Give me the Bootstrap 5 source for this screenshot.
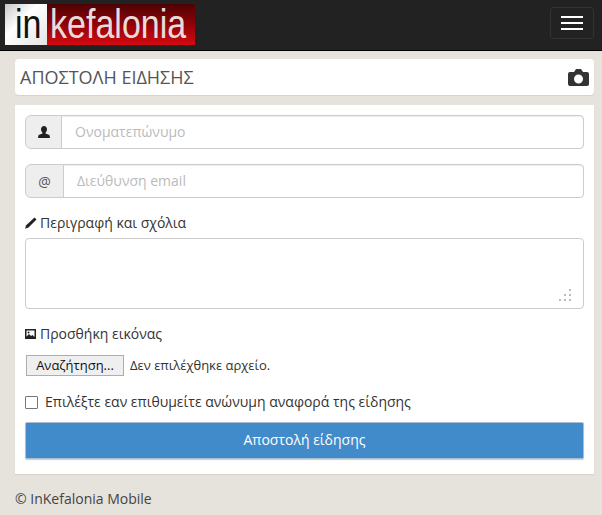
<!DOCTYPE html>
<html lang="el">
<head>
    <meta charset="UTF-8">
    <meta name="viewport" content="width=device-width, initial-scale=1.0">
    <title>InKefalonia Mobile</title>
    <link rel="stylesheet" href="https://cdn.jsdelivr.net/npm/bootstrap@5.3.0/dist/css/bootstrap.min.css">
    <style>
        body { background: #e6e2dc; color: #333; font-family: "Open Sans", "Noto Sans", sans-serif; font-size: 14px; line-height: 20px; }
        .top-bar { height: 51px; background: #222; border-bottom: 1px solid #000; padding: 4px 8px 0 5px; }
        .logo { display: flex; width: 190px; height: 41px; font-family: "Liberation Sans", sans-serif; font-size: 41px; line-height: 40px; }
        .logo span { display: block; transform: scaleX(.83); transform-origin: left; }
        .logo-in { flex: 0 0 39px; padding-left: 10px; color: #111; background: linear-gradient(135deg, #c8c8c8, #fff 40%, #e4e4e4); }
        .logo-name { flex: 1; min-width: 0; padding-left: 3px; color: #e6dcdc; background: linear-gradient(#4e0205, #8a0206 45%, #d40a10); }
        .menu-btn { width: 44px; height: 32px; margin-top: 3px; padding: 0; background: none; border: 1px solid #333; border-radius: 4px; }
        .menu-btn span { display: block; width: 22px; height: 2px; margin: 4px auto; background: #fff; }
        .page-wrap { padding: 8px 8px 0 15px; }
        .title-box { height: 36px; margin-bottom: 10px; padding: 0 5px; background: #fff; border-radius: 4px; box-shadow: 0 1px 1px #d6d2cc; }
        .title-box h1 { margin: 0; font-size: 18px; line-height: 38px; font-weight: 400; color: #555; }
        .form-box { height: 369px; padding: 10px 10px 0; background: #fff; box-shadow: 0 1px 1px #d6d2cc; }
        .field-group { height: 34px; margin-bottom: 15px; }
        .field-group .input-group-text { justify-content: center; padding: 0; font-size: 14px; color: #555; background: #eee; border-color: #ccc; }
        .addon-user { width: 37px; }
        .addon-at { width: 39px; }
        .field-group .form-control, .note-area { font-size: 14px; color: #555; border-color: #ccc; border-radius: 4px; }
        .field-group .form-control { height: 34px; min-height: 34px; padding: 5px 12px 7px 13px; line-height: 20px; box-shadow: inset 0 1px 1px rgba(0,0,0,.075); }
        .form-control::placeholder { color: #bbb; }
        .field-label { margin-bottom: 5px; color: #333; gap: 3px; }
        .note-wrap { height: 71px; margin-bottom: 15px; }
        .note-area { height: 71px; resize: none; }
        .grip { position: absolute; right: 13px; bottom: 8px; }
        .image-label { margin-bottom: 11px; gap: 4px; }
        .file-row { margin-bottom: 16px; margin-left: 1px; height: 21px; font-size: 13px; line-height: 18px; }
        .file-row span { margin-left: 6px; padding-bottom: 2px; }
        .file-btn { width: 98px; height: 21px; padding: 0 0 1px; font-size: 13px; line-height: 18px; color: #111; background: #efefef; border: 1px solid #adadad; }
        .check-row { height: 20px; margin-bottom: 10px; gap: 7px; }
        .check-row .form-check-input { width: 13px; height: 13px; margin: 0; border: 1px solid #767676; border-radius: 1px; }
        .send-btn { height: 37px; padding: 0 0 2px; font-size: 14px; color: #fff; background: #428bca; border: 1px solid #a9bfd0; border-radius: 2px; box-shadow: 0 1px 1px rgba(0,0,0,.2); }
        .foot-text { padding-top: 15px; color: #444; }
    </style>
</head>
<body>
    <div class="top-bar d-flex justify-content-between">
        <div class="logo">
            <div class="logo-in"><span>in</span></div>
            <div class="logo-name"><span>kefalonia</span></div>
        </div>
        <button class="menu-btn" type="button" aria-label="Menu"><span></span><span></span><span></span></button>
    </div>

    <div class="page-wrap">
        <div class="title-box d-flex justify-content-between align-items-center">
            <h1>ΑΠΟΣΤΟΛΗ ΕΙΔΗΣΗΣ</h1>
            <svg width="21" height="17" viewBox="0 0 21 17"><path fill="#333" fill-rule="evenodd" d="M2 3h4l2-3h5l2 3h4a2 2 0 0 1 2 2v10a2 2 0 0 1-2 2H2a2 2 0 0 1-2-2V5a2 2 0 0 1 2-2zM10.500 5.500a4.500 4.500 0 1 0 0 9 4.500 4.500 0 0 0 0-9z"/></svg>
        </div>

        <form class="form-box">
            <div class="input-group field-group">
                <span class="input-group-text addon-user">
                    <svg width="12" height="12" viewBox="0 0 12 12"><path fill="#222" d="M6 0c1.800 0 3 1.300 3 3.300 0 1.500-.7 2.800-1.500 3.400v.8c1.800.5 4 1.300 4.200 2.300l.3 2.200H0l.3-2.200c.2-1 2.400-1.800 4.200-2.300v-.8C3.700 6.100 3 4.800 3 3.300 3 1.300 4.200 0 6 0z"/></svg>
                </span>
                <input type="text" class="form-control" placeholder="Ονοματεπώνυμο">
            </div>
            <div class="input-group field-group">
                <span class="input-group-text addon-at">@</span>
                <input type="text" class="form-control" placeholder="Διεύθυνση email">
            </div>

            <div class="field-label d-flex align-items-center">
                <svg width="12" height="12" viewBox="0 0 12 12"><path fill="#222" d="M9.500 0.500l2 2-8 8-3.500 1.200 1.200-3.500z"/></svg>
                <span>Περιγραφή και σχόλια</span>
            </div>
            <div class="note-wrap position-relative">
                <textarea class="form-control note-area"></textarea>
                <svg class="grip" width="12" height="12" viewBox="0 0 12 12"><g fill="#bbb"><rect x="10" y="0" width="2" height="2"/><rect x="5" y="5" width="2" height="2"/><rect x="10" y="5" width="2" height="2"/><rect x="0" y="10" width="2" height="2"/><rect x="5" y="10" width="2" height="2"/><rect x="10" y="10" width="2" height="2"/></g></svg>
            </div>

            <div class="field-label image-label d-flex align-items-center">
                <svg width="11" height="10" viewBox="0 0 11 10"><path fill="#222" fill-rule="evenodd" d="M0 0h11v10H0zM1.500 1.500v6l2.500-2.500 2 2 1.500-1 2 2V1.500z"/><circle fill="#222" cx="3.500" cy="3.500" r="1"/></svg>
                <span>Προσθήκη εικόνας</span>
            </div>
            <div class="file-row d-flex align-items-center">
                <button type="button" class="file-btn">Αναζήτηση...</button>
                <span>Δεν επιλέχθηκε αρχείο.</span>
            </div>

            <div class="check-row d-flex align-items-center">
                <input class="form-check-input" type="checkbox" id="anon">
                <label for="anon">Επιλέξτε εαν επιθυμείτε ανώνυμη αναφορά της είδησης</label>
            </div>

            <button type="button" class="send-btn w-100">Αποστολή είδησης</button>
        </form>

        <div class="foot-text">© InKefalonia Mobile</div>
    </div>

    <script src="https://cdn.jsdelivr.net/npm/bootstrap@5.3.0/dist/js/bootstrap.bundle.min.js"></script>
</body>
</html>
